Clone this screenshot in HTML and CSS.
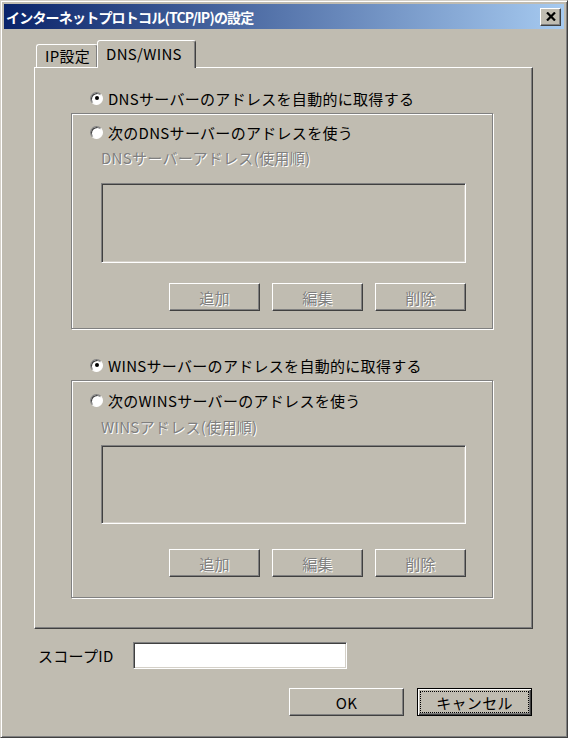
FILE: index.html
```html
<!DOCTYPE html>
<html lang="ja">
<head>
  <meta charset="UTF-8" />
  <meta name="viewport" content="width=device-width, initial-scale=1" />
  <title>インターネットプロトコル(TCP/IP)の設定</title>
  <link rel="stylesheet" href="styles.css">
</head>
<body>
  <div class="window">
    <div class="titlebar">
      <span class="title">インターネットプロトコル(TCP/IP)の設定</span>
      <button class="close" type="button" aria-label="閉じる">
        <svg width="10" height="9" viewBox="0 0 10 9">
          <path d="M1 0.5 L9 8.5 M9 0.5 L1 8.5" stroke="#000" stroke-width="2.2" fill="none" />
        </svg>
      </button>
    </div>

    <div class="content">
      <div class="tabs">
        <div class="tab">IP設定</div>
        <div class="tab active">DNS/WINS</div>
      </div>

      <div class="panel">
        <label class="radio-row">
          <span class="radio checked"></span>DNSサーバーのアドレスを自動的に取得する
        </label>

        <div class="group dns">
          <label class="radio-row">
            <span class="radio"></span>次のDNSサーバーのアドレスを使う
          </label>
          <div class="caption disabled">DNSサーバーアドレス(使用順)</div>
          <div class="listbox"></div>
          <div class="btn-row">
            <button class="btn" type="button" disabled>追加</button>
            <button class="btn" type="button" disabled>編集</button>
            <button class="btn" type="button" disabled>削除</button>
          </div>
        </div>

        <label class="radio-row second">
          <span class="radio checked"></span>WINSサーバーのアドレスを自動的に取得する
        </label>

        <div class="group wins">
          <label class="radio-row">
            <span class="radio"></span>次のWINSサーバーのアドレスを使う
          </label>
          <div class="caption disabled">WINSアドレス(使用順)</div>
          <div class="listbox"></div>
          <div class="btn-row">
            <button class="btn" type="button" disabled>追加</button>
            <button class="btn" type="button" disabled>編集</button>
            <button class="btn" type="button" disabled>削除</button>
          </div>
        </div>
      </div>

      <div class="scope-row">
        <span class="scope-label">スコープID</span>
        <div class="textbox"></div>
      </div>

      <div class="dialog-buttons">
        <button class="btn wide" type="button">OK</button>
        <button class="btn wide default" type="button"><span class="focus">キャンセル</span></button>
      </div>
    </div>
  </div>
</body>
</html>
```

FILE: styles.css
```css
/* Classic Windows dialog */
body {
  margin: 0;
  font-family: "Noto Sans CJK JP", "Liberation Sans", sans-serif;
  font-size: 15px;
  letter-spacing: 0.3px;
  color: #000;
  background: #c0bcb1;
}

.window {
  width: 568px;
  height: 738px;
  box-sizing: border-box;
  background: #c0bcb1;
  border: 1px solid;
  border-color: #d4d0c8 #404040 #404040 #d4d0c8;
  box-shadow: inset 1px 1px #fff, inset -1px -1px #808080;
  padding: 3px;
}

/* Title bar */
.titlebar {
  height: 25px;
  display: flex;
  align-items: center;
  justify-content: space-between;
  background: linear-gradient(to right, #0a246a, #a6caf0);
  padding: 0 3px 0 2px;
}

.title {
  color: #fff;
  font-weight: 700;
  font-size: 14px;
  letter-spacing: -0.8px;
  white-space: nowrap;
}

.close {
  width: 21px;
  height: 18px;
  padding: 0;
  display: flex;
  align-items: center;
  justify-content: center;
  background: #c0bcb1;
  border: 1px solid;
  border-color: #fff #404040 #404040 #fff;
  box-shadow: inset -1px -1px #808080;
}

.content {
  padding: 11px 31px 0 30px;
}

/* Tabs */
.tabs {
  height: 27px;
  display: flex;
  align-items: flex-end;
  padding-left: 2px;
}

.tab {
  height: 23px;
  box-sizing: border-box;
  border: 1px solid;
  border-bottom: none;
  border-color: #fff #404040 transparent #fff;
  border-radius: 3px 3px 0 0;
  box-shadow: inset -1px 0 #808080;
  padding: 0 7px 0 8px;
  line-height: 22px;
  white-space: nowrap;
}

.tab.active {
  position: relative;
  z-index: 1;
  height: 28px;
  margin-left: -1px;
  margin-bottom: -1px;
  padding: 2px 13px 0 8px;
  background: #c0bcb1;
}

.panel {
  height: 562px;
  box-sizing: border-box;
  border: 1px solid;
  border-color: #fff #404040 #404040 #fff;
  box-shadow: inset -1px -1px #808080;
  padding-top: 20px;
}

/* Radio buttons */
.radio-row {
  height: 20px;
  display: flex;
  align-items: center;
  gap: 5px;
  margin-left: 55px;
  white-space: nowrap;
}

.radio-row.second {
  margin-top: 26px;
}

.group .radio-row {
  margin-left: 0;
}

.radio {
  width: 13px;
  height: 13px;
  box-sizing: border-box;
  border-radius: 50%;
  background: #fff;
  border: 1px solid;
  border-color: #808080 #fff #fff #808080;
  box-shadow: inset 1px 1px #404040;
  display: flex;
  align-items: center;
  justify-content: center;
  flex-shrink: 0;
}

.radio.checked::after {
  content: "";
  width: 4px;
  height: 4px;
  border-radius: 50%;
  background: #000;
}

/* Group boxes */
.group {
  width: 422px;
  box-sizing: border-box;
  margin: 5px 0 0 36px;
  border: 1px solid #808080;
  box-shadow: inset 1px 1px #fff, 1px 1px #fff;
  padding: 8px 0 17px 18px;
}

.group.wins {
  padding: 9px 0 20px 18px;
}

.caption {
  height: 20px;
  line-height: 20px;
  margin: 6px 0 0 11px;
  white-space: nowrap;
}

.wins .caption {
  margin-top: 7px;
}

.disabled,
.btn:disabled {
  color: #808080;
  text-shadow: 1px 1px #fff;
}

.listbox {
  width: 365px;
  height: 80px;
  box-sizing: border-box;
  margin: 15px 0 0 11px;
  border: 1px solid;
  border-color: #808080 #fff #fff #808080;
  box-shadow: inset 1px 1px #404040, inset -1px -1px #d4d0c8;
}

.wins .listbox {
  height: 79px;
  margin-top: 8px;
}

.btn-row {
  width: 365px;
  margin: 20px 0 0 11px;
  display: flex;
  justify-content: flex-end;
  gap: 12px;
}

.wins .btn-row {
  margin-top: 25px;
}

/* Buttons */
.btn {
  width: 91px;
  height: 28px;
  padding: 0;
  font-family: inherit;
  font-size: 15px;
  letter-spacing: inherit;
  color: #000;
  background: #c0bcb1;
  border: 1px solid;
  border-color: #fff #404040 #404040 #fff;
  box-shadow: inset -1px -1px #808080;
}

.btn.wide {
  width: 115px;
}

.btn.default {
  border-color: #000;
  box-shadow: inset 1px 1px #fff, inset -1px -1px #404040, inset -2px -2px #808080;
  padding: 3px;
  display: flex;
}

.focus {
  flex: 1;
  display: flex;
  align-items: center;
  justify-content: center;
  outline: 1px dotted #000;
}

/* Bottom area */
.scope-row {
  display: flex;
  align-items: center;
  margin-top: 13px;
}

.scope-label {
  width: 95px;
  padding-left: 4px;
  white-space: nowrap;
}

.textbox {
  width: 214px;
  height: 27px;
  box-sizing: border-box;
  background: #fff;
  border: 1px solid;
  border-color: #808080 #fff #fff #808080;
  box-shadow: inset 1px 1px #404040, inset -1px -1px #d4d0c8;
}

.dialog-buttons {
  display: flex;
  justify-content: flex-end;
  gap: 13px;
  margin: 19px 1px 0 0;
}
```
